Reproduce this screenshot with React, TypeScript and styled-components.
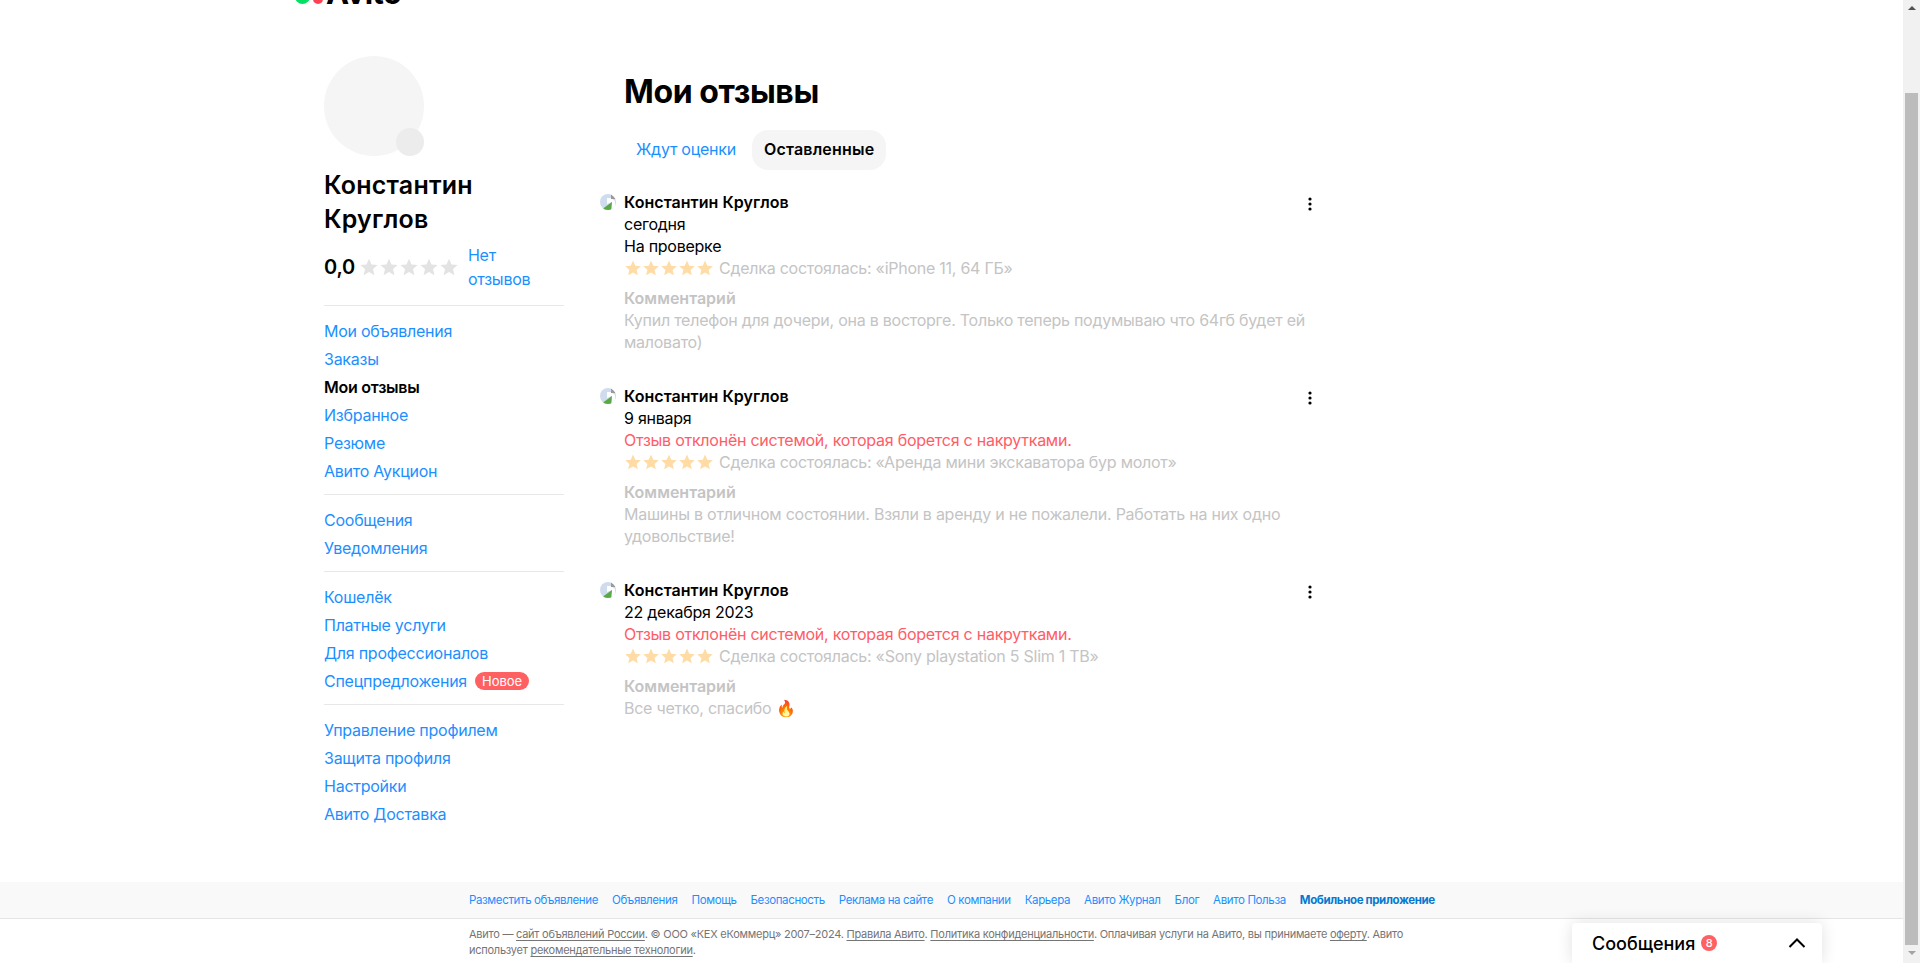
import styled, { createGlobalStyle } from 'styled-components';

const GlobalStyle = createGlobalStyle`
  html, body {
    margin: 0;
    height: 963px;
    overflow: hidden;
    background: #fff;
    font-family: Inter, "Noto Sans", sans-serif;
    color: #000;
  }
`;

const Viewport = styled.div`
  display: flex;
  height: 963px;
`;

const Page = styled.div`
  flex: 1;
  min-width: 0;
  display: flex;
  flex-direction: column;
  position: relative;
`;

const Scrollbar = styled.div`
  width: 17px;
  background: #f1f1f1;
  display: flex;
  flex-direction: column;
  align-items: center;
`;

const ScrollThumb = styled.div`
  width: 13px;
  height: 852px;
  margin-top: 77px;
  background: #bcbcbc;
`;

const ScrollArrow = styled.div<{ $down?: boolean }>`
  width: 0;
  height: 0;
  margin: 6px 0;
  border-left: 4px solid transparent;
  border-right: 4px solid transparent;
  ${p => (p.$down ? 'border-top: 4px solid #a3a3a3;' : 'border-bottom: 4px solid #505050;')}
`;

const TopStrip = styled.div`
  height: 4px;
  overflow: hidden;
  padding-left: 295px;
  display: flex;
  align-items: flex-end;
  gap: 3px;
`;

const LogoDot = styled.span<{ $color: string; $size: number }>`
  display: block;
  flex: none;
  width: ${p => p.$size}px;
  height: ${p => p.$size}px;
  border-radius: 50%;
  background: ${p => p.$color};
`;

const LogoText = styled.span`
  flex: none;
  font-size: 31px;
  line-height: 22px;
  font-weight: 700;
  letter-spacing: -0.5px;
`;

const Main = styled.div`
  display: flex;
  height: 878px;
  padding: 52px 0 0 324px;
  box-sizing: border-box;
  letter-spacing: -0.25px;
`;

const Sidebar = styled.aside`
  width: 240px;
  margin-right: 36px;
  flex: none;
`;

const Avatar = styled.div`
  position: relative;
  width: 100px;
  height: 100px;
  border-radius: 50%;
  background: #f5f5f5;
`;

const AvatarBadge = styled.div`
  position: absolute;
  right: 0;
  bottom: 0;
  width: 28px;
  height: 28px;
  border-radius: 50%;
  background: #ececec;
`;

const ProfileName = styled.div`
  margin-top: 12px;
  font-size: 25px;
  line-height: 34px;
  font-weight: 600;
  letter-spacing: 0.2px;
`;

const RatingRow = styled.div`
  display: flex;
  align-items: center;
  margin-top: 7px;
  padding-bottom: 5px;
`;

const RatingValue = styled.span`
  font-size: 20px;
  font-weight: 600;
  margin-right: 4px;
`;

const NoReviews = styled.a`
  width: 76px;
  margin-left: 9px;
  font-size: 16px;
  line-height: 24px;
  color: #1c8fff;
`;

const Divider = styled.div`
  height: 1px;
  background: #e8e8e8;
  margin: 9px 0 11px;
`;

const NavItem = styled.div<{ $active?: boolean }>`
  display: flex;
  align-items: center;
  height: 28px;
  font-size: 16px;
  font-weight: ${p => (p.$active ? 600 : 400)};
  color: ${p => (p.$active ? '#000' : '#1c8fff')};
`;

const NewBadge = styled.span`
  margin-left: 8px;
  height: 18px;
  padding: 0 7px;
  border-radius: 9px;
  background: #ff6163;
  color: #fff;
  font-size: 13px;
  line-height: 18px;
  letter-spacing: 0;
`;

const Content = styled.section`
  width: 720px;
`;

const Title = styled.h1`
  margin: 14px 0 0 24px;
  font-size: 32px;
  line-height: 44px;
  font-weight: 700;
  letter-spacing: -0.4px;
`;

const Tabs = styled.div`
  display: flex;
  gap: 4px;
  margin: 16px 0 0 24px;
`;

const Tab = styled.div<{ $active?: boolean }>`
  height: 40px;
  padding: 0 12px;
  border-radius: 16px;
  font-size: 16px;
  line-height: 38px;
  font-weight: ${p => (p.$active ? 600 : 400)};
  letter-spacing: ${p => (p.$active ? '0.2px' : '-0.25px')};
  color: ${p => (p.$active ? '#000' : '#1c8fff')};
  background: ${p => (p.$active ? '#f5f5f5' : 'transparent')};
`;

const ReviewList = styled.div`
  margin-top: 21px;
`;

const Review = styled.article`
  display: flex;
  height: 194px;
  font-size: 16px;
  line-height: 22px;
`;

const BrokenImage = styled.svg`
  flex: none;
  width: 16px;
  height: 16px;
  margin: 3px 8px 0 0;
`;

const ReviewBody = styled.div`
  width: 688px;
  position: relative;
`;

const Author = styled.div`
  font-weight: 600;
  letter-spacing: 0.05px;
`;

const Status = styled.div<{ $rejected?: boolean }>`
  color: ${p => (p.$rejected ? '#ff5c67' : '#000')};
`;

const Deal = styled.div`
  display: flex;
  align-items: center;
  color: #c4c4c4;
`;

const Stars = styled.span`
  display: flex;
  margin-right: 5px;
`;

const Comment = styled.div`
  margin-top: 8px;
  color: #c4c4c4;
`;

const CommentLabel = styled.div`
  font-weight: 600;
  letter-spacing: 0;
`;

const MoreButton = styled.svg`
  position: absolute;
  right: 0;
  top: 6px;
`;

const Footer = styled.footer`
  height: 81px;
  font-size: 11.5px;
  letter-spacing: -0.37px;
`;

const FooterLinks = styled.div`
  display: flex;
  gap: 14px;
  height: 36px;
  align-items: center;
  padding-left: 469px;
  background: #f9f9f9;
  border-bottom: 1px solid #e5e5e5;
`;

const FooterLink = styled.span<{ $bold?: boolean }>`
  color: ${p => (p.$bold ? '#0678d0' : '#1c8fff')};
  font-weight: ${p => (p.$bold ? 700 : 400)};
`;

const Legal = styled.div`
  width: 970px;
  padding: 7px 0 0 469px;
  font-size: 11px;
  letter-spacing: -0.25px;
  line-height: 16px;
  color: #757575;

  u {
    text-underline-offset: 2px;
  }
`;

const MessagesWidget = styled.div`
  position: absolute;
  left: 1572px;
  bottom: 0;
  width: 250px;
  height: 40px;
  padding: 0 16px 0 20px;
  box-sizing: border-box;
  display: flex;
  align-items: center;
  background: #fff;
  border-radius: 4px 4px 0 0;
  box-shadow: 0 0 16px rgba(0, 0, 0, 0.12);
  font-size: 18px;
  font-weight: 500;
`;

const Counter = styled.span`
  width: 16px;
  height: 16px;
  margin-left: 6px;
  border-radius: 50%;
  background: #ff6163;
  color: #fff;
  font-size: 11px;
  line-height: 16px;
  text-align: center;
`;

const Chevron = styled.svg`
  margin-left: auto;
`;

const Star = ({ color, size = 18 }: { color: string; size?: number }) => (
  <svg width={size} height={size} viewBox="0 0 24 24">
    <path fill={color} d="M12 2l3 6.9 7.4.7-5.6 4.9 1.7 7.3L12 17.9l-6.5 3.9 1.7-7.3L1.6 9.6 9 8.9z" />
  </svg>
);

const navGroups = [
  ['Мои объявления', 'Заказы', 'Мои отзывы', 'Избранное', 'Резюме', 'Авито Аукцион'],
  ['Сообщения', 'Уведомления'],
  ['Кошелёк', 'Платные услуги', 'Для профессионалов', 'Спецпредложения'],
  ['Управление профилем', 'Защита профиля', 'Настройки', 'Авито Доставка'],
];

const reviews = [
  {
    date: 'сегодня',
    status: 'На проверке',
    rejected: false,
    deal: 'Сделка состоялась: «iPhone 11, 64 ГБ»',
    text: 'Купил телефон для дочери, она в восторге. Только теперь подумываю что 64гб будет ей маловато)',
  },
  {
    date: '9 января',
    status: 'Отзыв отклонён системой, которая борется с накрутками.',
    rejected: true,
    deal: 'Сделка состоялась: «Аренда мини экскаватора бур молот»',
    text: 'Машины в отличном состоянии. Взяли в аренду и не пожалели. Работать на них одно удовольствие!',
  },
  {
    date: '22 декабря 2023',
    status: 'Отзыв отклонён системой, которая борется с накрутками.',
    rejected: true,
    deal: 'Сделка состоялась: «Sony playstation 5 Slim 1 TB»',
    text: 'Все четко, спасибо 🔥',
  },
];

const footerLinks = [
  'Разместить объявление', 'Объявления', 'Помощь', 'Безопасность', 'Реклама на сайте',
  'О компании', 'Карьера', 'Авито Журнал', 'Блог', 'Авито Польза',
];

const App = () => (
  <Viewport>
    <GlobalStyle />
    <Page>
      <TopStrip>
        <LogoDot $color="#04e061" $size={15} />
        <LogoDot $color="#ff4053" $size={10} />
        <LogoText>Avito</LogoText>
      </TopStrip>
      <Main>
        <Sidebar>
          <Avatar><AvatarBadge /></Avatar>
          <ProfileName>Константин Круглов</ProfileName>
          <RatingRow>
            <RatingValue>0,0</RatingValue>
            {[0, 1, 2, 3, 4].map(i => <Star key={i} color="#e3e3e3" size={20} />)}
            <NoReviews>Нет отзывов</NoReviews>
          </RatingRow>
          {navGroups.map(group => (
            <div key={group[0]}>
              <Divider />
              {group.map(item => (
                <NavItem key={item} $active={item === 'Мои отзывы'}>
                  {item}
                  {item === 'Спецпредложения' && <NewBadge>Новое</NewBadge>}
                </NavItem>
              ))}
            </div>
          ))}
        </Sidebar>
        <Content>
          <Title>Мои отзывы</Title>
          <Tabs>
            <Tab>Ждут оценки</Tab>
            <Tab $active>Оставленные</Tab>
          </Tabs>
          <ReviewList>
            {reviews.map(review => (
              <Review key={review.date}>
                <BrokenImage viewBox="0 0 16 16">
                  <defs>
                    <clipPath id="round">
                      <circle cx="8" cy="8" r="8" />
                    </clipPath>
                  </defs>
                  <g clipPath="url(#round)">
                    <path fill="#cfdcee" d="M0 0h11l5 5v11H0z" />
                    <path fill="#fff" d="M7 4h4l4 3v9h-3l0-8-5 2z" />
                    <path fill="#58a845" d="M1 16l11-8-1 8z" />
                    <path fill="#9a9a9a" d="M11 0v5h5zM13 16l3-3v3z" />
                  </g>
                </BrokenImage>
                <ReviewBody>
                  <Author>Константин Круглов</Author>
                  <div>{review.date}</div>
                  <Status $rejected={review.rejected}>{review.status}</Status>
                  <Deal>
                    <Stars>{[0, 1, 2, 3, 4].map(i => <Star key={i} color="#ffdca6" />)}</Stars>
                    {review.deal}
                  </Deal>
                  <Comment>
                    <CommentLabel>Комментарий</CommentLabel>
                    {review.text}
                  </Comment>
                  <MoreButton width="4" height="14" viewBox="0 0 4 14">
                    <circle cx="2" cy="2" r="1.6" />
                    <circle cx="2" cy="7" r="1.6" />
                    <circle cx="2" cy="12" r="1.6" />
                  </MoreButton>
                </ReviewBody>
              </Review>
            ))}
          </ReviewList>
        </Content>
      </Main>
      <Footer>
        <FooterLinks>
          {footerLinks.map(link => <FooterLink key={link}>{link}</FooterLink>)}
          <FooterLink $bold>Мобильное приложение</FooterLink>
        </FooterLinks>
        <Legal>
          Авито — <u>сайт объявлений России</u>. © ООО «КЕХ еКоммерц» 2007–2024. <u>Правила Авито</u>. <u>Политика конфиденциальности</u>. Оплачивая услуги на Авито, вы принимаете <u>оферту</u>. Авито использует <u>рекомендательные технологии</u>.
        </Legal>
      </Footer>
      <MessagesWidget>
        Сообщения
        <Counter>8</Counter>
        <Chevron width="18" height="10" viewBox="0 0 18 10" fill="none" stroke="#000" strokeWidth="2">
          <path d="M1.5 9L9 1.5 16.5 9" />
        </Chevron>
      </MessagesWidget>
    </Page>
    <Scrollbar>
      <ScrollArrow />
      <ScrollThumb />
      <ScrollArrow $down />
    </Scrollbar>
  </Viewport>
);

export default App;
